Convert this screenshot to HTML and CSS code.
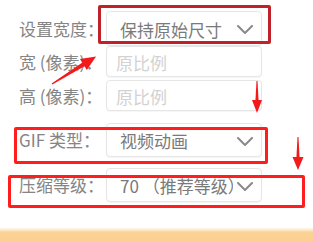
FILE: index.html
```html
<!DOCTYPE html>
<html lang="zh-CN">
<head>
    <meta charset="UTF-8">
    <title>GIF 设置</title>
    <link rel="stylesheet" href="styles.css">
</head>
<body>
    <div class="page">

        <!-- Settings form -->
        <div class="form">
            <div class="row row-1">
                <span class="label">设置宽度：</span>
                <div class="field select">
                    <span class="value">保持原始尺寸</span>
                    <svg class="chev" width="16" height="9" viewBox="0 0 16 9"><polyline points="1,1 8,8 15,1"/></svg>
                </div>
            </div>
            <div class="row row-2">
                <span class="label">宽 (像素)：</span>
                <div class="field input"><span class="placeholder">原比例</span></div>
            </div>
            <div class="row row-3">
                <span class="label">高 (像素)：</span>
                <div class="field input"><span class="placeholder">原比例</span></div>
            </div>
            <div class="row row-4">
                <span class="label">GIF 类型：</span>
                <div class="field select">
                    <span class="value">视频动画</span>
                    <svg class="chev" width="16" height="9" viewBox="0 0 16 9"><polyline points="1,1 8,8 15,1"/></svg>
                </div>
            </div>
            <div class="row row-5">
                <span class="label">压缩等级：</span>
                <div class="field select">
                    <span class="value">70 （推荐等级）</span>
                    <svg class="chev" width="16" height="9" viewBox="0 0 16 9"><polyline points="1,1 8,8 15,1"/></svg>
                </div>
            </div>
        </div>

        <div class="bottom-bar"></div>

        <!-- Annotations -->
        <div class="mark mark-1"></div>
        <div class="mark mark-2"></div>
        <div class="mark mark-3"></div>

        <svg class="arrows" width="313" height="242" viewBox="0 0 313 242">
            <g transform="translate(52,84) rotate(-122)">
                <polygon points="-0.7,0 0.7,0 2.2,39 -2.2,39"/>
                <polygon points="-6.5,37 6.5,37 0,52"/>
            </g>
            <g transform="translate(257,81)">
                <polygon points="-0.5,0 0.5,0 1.6,20 -1.6,20"/>
                <polygon points="-5,19 5,19 0,32"/>
            </g>
            <g transform="translate(298,137)">
                <polygon points="-0.5,0 0.5,0 1.6,21 -1.6,21"/>
                <polygon points="-5.5,20 5.5,20 0,33"/>
            </g>
        </svg>
    </div>
</body>
</html>
```

FILE: styles.css
```css
* {
    margin: 0;
    padding: 0;
    box-sizing: border-box;
}

body {
    background-color: #ffffff;
    font-family: "Noto Sans CJK SC", "Noto Sans", sans-serif;
}

.page {
    position: relative;
    width: 313px;
    height: 242px;
    display: flex;
    flex-direction: column;
    overflow: hidden;
}

/* Form */
.form {
    padding: 11px 0 0 19px;
}

.row {
    display: flex;
    align-items: center;
}

.row-2 { margin-bottom: 3px; }
.row-3 { margin-bottom: 12px; }
.row-4 { margin-bottom: 11px; }

.label {
    width: 87px;
    font-size: 17px;
    line-height: 24px;
    color: #858585;
    white-space: nowrap;
}

.field {
    width: 156px;
    height: 31px;
    display: flex;
    align-items: center;
    background-color: #fff;
    border: 1px solid #e6e6e6;
    border-radius: 4px;
    box-shadow: 0 1px 1px rgba(0, 0, 0, 0.04);
}

.select {
    height: 34px;
    padding: 2px 8px 0 13px;
}

.row-1 .select {
    height: 35px;
}

.input {
    padding: 2px 0 0 9px;
}

.value {
    flex: 1;
    font-size: 17px;
    line-height: 24px;
    color: #7a7a7a;
    white-space: nowrap;
    overflow: hidden;
}

.placeholder {
    font-size: 17px;
    line-height: 24px;
    color: #d2d2d2;
}

.chev {
    flex-shrink: 0;
    margin-left: 4px;
}

.chev polyline {
    fill: none;
    stroke: #8a8a8a;
    stroke-width: 2;
    stroke-linecap: round;
    stroke-linejoin: round;
}

/* Bottom bar */
.bottom-bar {
    margin-top: auto;
    height: 15px;
    background: linear-gradient(#fff 0, #fde9cc 3px, #fbd397 5px, #fbd092 100%);
}

/* Red annotation boxes */
.mark {
    position: absolute;
    border: 3px solid #ff1d1d;
    border-radius: 2px;
}

.mark-1 {
    left: 98px;
    top: 5px;
    width: 173px;
    height: 39px;
    border-color: #c0222b;
}

.mark-2 {
    left: 14px;
    top: 127px;
    width: 254px;
    height: 37px;
}

.mark-3 {
    left: 8px;
    top: 175px;
    width: 297px;
    height: 33px;
}

.arrows {
    position: absolute;
    left: 0;
    top: 0;
}

.arrows polygon {
    fill: #f21a1a;
}
```
